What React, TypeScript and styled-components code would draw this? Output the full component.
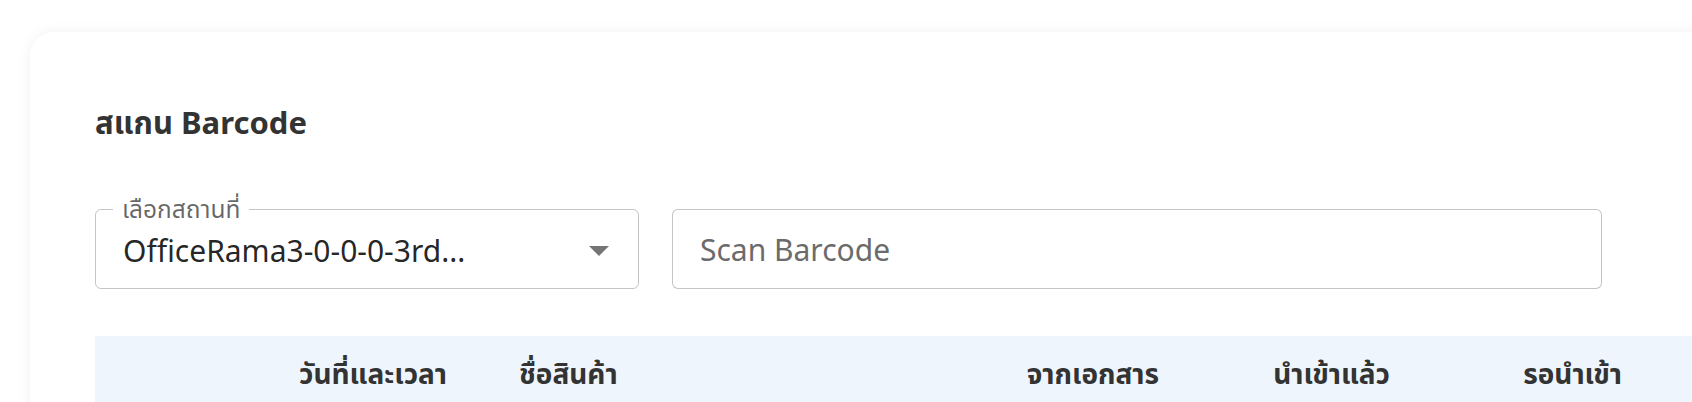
import styled, { createGlobalStyle } from 'styled-components'

const GlobalStyle = createGlobalStyle`
    html, body {
        margin: 0;
        padding: 0;
        background: #ffffff;
        overflow: hidden;
    }
    body {
        font-family: "Noto Sans", "Noto Sans Thai", "Noto Sans Thai UI", sans-serif;
        color: #333333;
    }
`;

const Page = styled.div`
    width: 1692px;
    height: 402px;
    padding: 32px 0 0 30px;
    box-sizing: border-box;
    overflow: hidden;
`;

const Card = styled.section`
    width: 1720px;
    min-height: 500px;
    background: #ffffff;
    border-radius: 24px;
    box-shadow: 0 0 14px rgba(0, 0, 0, 0.06);
    padding: 73px 0 0 65px;
    box-sizing: border-box;
`;

const Title = styled.h2`
    margin: 0;
    font-size: 31px;
    line-height: 34px;
    font-weight: 700;
    color: #333333;
`;

const FormRow = styled.div`
    display: flex;
    align-items: flex-end;
    gap: 33px;
    width: 1507px;
    margin-top: 58px;
`;

const Fieldset = styled.fieldset`
    width: 544px;
    box-sizing: border-box;
    margin: 0;
    padding: 0 27px 9px 27px;
    border: 1px solid rgba(0, 0, 0, 0.23);
    border-radius: 6px;
    flex-shrink: 0;
`;

const Legend = styled.legend`
    margin-left: -10px;
    padding: 0 9px;
    font-size: 24.5px;
    line-height: 24px;
    color: rgba(0, 0, 0, 0.6);
`;

const SelectValue = styled.div`
    display: flex;
    align-items: center;
    justify-content: space-between;
    height: 58px;
    font-size: 30px;
    color: rgba(0, 0, 0, 0.87);
    cursor: pointer;
`;

const Arrow = styled.svg`
    width: 48px;
    height: 48px;
    margin-right: -12px;
    fill: rgba(0, 0, 0, 0.54);
`;

const ScanInput = styled.input`
    flex: 1;
    height: 80px;
    box-sizing: border-box;
    border: 1px solid rgba(0, 0, 0, 0.23);
    border-radius: 6px;
    padding: 0 27px;
    font-family: inherit;
    font-size: 30px;
    color: rgba(0, 0, 0, 0.87);
    outline: none;

    &::placeholder {
        color: #6b6b6b;
        opacity: 1;
    }
`;

const TableHead = styled.div`
    display: grid;
    grid-template-columns: 400px 457px 231px 231px 232px 1fr;
    height: 78px;
    margin-top: 47px;
    background: #eef5fc;
`;

interface HeadCellProps {
    align: 'left' | 'right'
    gutter: number
}

const HeadCell = styled.div<HeadCellProps>`
    display: flex;
    align-items: center;
    justify-content: ${props => props.align === 'right' ? 'flex-end' : 'flex-start'};
    padding: ${props => props.align === 'right' ? `0 ${props.gutter}px 0 0` : `0 0 0 ${props.gutter}px`};
    font-size: 28px;
    font-weight: 700;
    color: #333333;
    white-space: nowrap;
`;

const columns: { label: string, align: 'left' | 'right', gutter: number }[] = [
    { label: 'วันที่และเวลา', align: 'right', gutter: 48 },
    { label: 'ชื่อสินค้า', align: 'left', gutter: 24 },
    { label: 'จากเอกสาร', align: 'right', gutter: 24 },
    { label: 'นำเข้าแล้ว', align: 'right', gutter: 24 },
    { label: 'รอนำเข้า', align: 'right', gutter: 24 },
    { label: '', align: 'left', gutter: 24 },
];

export default function App() {
    return (
        <>
            <GlobalStyle />
            <Page>
                <Card>
                    <Title>สแกน Barcode</Title>
                    <FormRow>
                        <Fieldset>
                            <Legend>เลือกสถานที่</Legend>
                            <SelectValue>
                                <span>OfficeRama3-0-0-0-3rd...</span>
                                <Arrow viewBox="0 0 24 24"><path d="M7 10l5 5 5-5z" /></Arrow>
                            </SelectValue>
                        </Fieldset>
                        <ScanInput placeholder="Scan Barcode" />
                    </FormRow>
                    <TableHead>
                        {columns.map((c, i) => (
                            <HeadCell key={i} align={c.align} gutter={c.gutter}>{c.label}</HeadCell>
                        ))}
                    </TableHead>
                </Card>
            </Page>
        </>
    )
}
